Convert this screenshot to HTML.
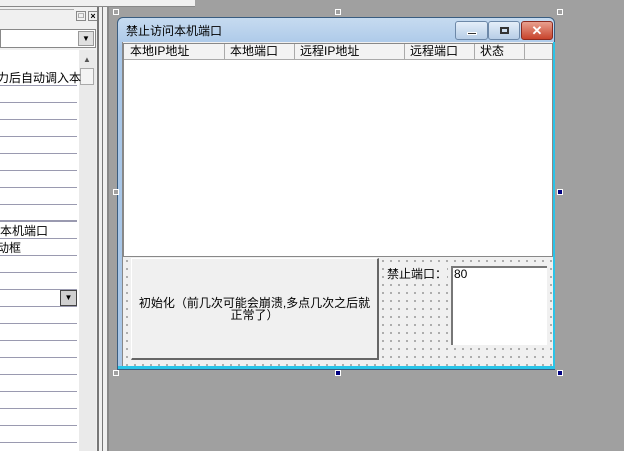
<!DOCTYPE html><html><head><meta charset="utf-8"><style>
*{margin:0;padding:0;box-sizing:border-box}
body{width:624px;height:451px;background:#a0a0a0;position:relative;overflow:hidden;font-family:"Liberation Sans","Noto Sans CJK SC",sans-serif;font-size:12px;color:#000}
.a{position:absolute}
.h{position:absolute;width:6px;height:6px;border:1px solid #fff;background:#a0a0a0}
.hf{position:absolute;width:6px;height:6px;background:#000080;border:1px solid #fff}
.dots{background-image:radial-gradient(#555 0.6px,transparent 0.9px);background-size:8px 8px;background-color:#f0f0f0}
</style></head><body>
<div class="a" style="left:0;top:0;width:195px;height:7px;background:#f0f0f0;border-bottom:1px solid #888"></div>
<div class="a" style="left:0;top:7px;width:109px;height:444px;background:#f0f0f0"></div>
<div class="a" style="left:0;top:9px;width:74px;height:1px;background:#aaa"></div>
<div class="a" style="left:76px;top:11px;width:10px;height:10px;border:1px solid #888;background:#f0f0f0;font-size:8px;line-height:8px;text-align:center">□</div>
<div class="a" style="left:88px;top:11px;width:10px;height:10px;border:1px solid #888;background:#f0f0f0;font-size:9px;font-weight:bold;line-height:8px;text-align:center">×</div>
<div class="a" style="left:0;top:29px;width:96px;height:19px;background:#fff;border:1px solid #888"></div>
<div class="a" style="left:78px;top:31px;width:16px;height:15px;background:#e0e0e0;border:1px solid #999;font-size:8px;text-align:center;line-height:14px">▼</div>
<div class="a" style="left:0;top:50px;width:79px;height:401px;background:#fff"></div>
<div class="a" style="left:79px;top:50px;width:17px;height:401px;background:#eaeaea"></div>
<div class="a" style="left:80px;top:68px;width:14px;height:17px;background:#f4f4f4;border:1px solid #aaa"></div>
<div class="a" style="left:83px;top:55px;font-size:8px;color:#555">▲</div>
<div class="a" style="left:97px;top:7px;width:2px;height:444px;background:#777"></div>
<div class="a" style="left:102px;top:7px;width:1px;height:444px;background:#777"></div>
<div class="a" style="left:107px;top:7px;width:2px;height:444px;background:#888"></div>
<div class="a" style="left:-3px;top:69px;white-space:nowrap">力后自动调入本</div>
<div class="a" style="left:0;top:222px;white-space:nowrap">本机端口</div>
<div class="a" style="left:-3px;top:239px;white-space:nowrap">动框</div>
<div class="a" style="left:60px;top:290px;width:17px;height:16px;background:#d0d0d0;border:1px solid #444;font-size:8px;text-align:center;line-height:14px">▼</div>
<svg class="a" style="left:0;top:0" width="79" height="451">
<g stroke="#9a9ab0" stroke-width="1">
<line x1="0" y1="85.5" x2="77" y2="85.5"/><line x1="0" y1="102.5" x2="77" y2="102.5"/><line x1="0" y1="119.5" x2="77" y2="119.5"/><line x1="0" y1="136.5" x2="77" y2="136.5"/><line x1="0" y1="153.5" x2="77" y2="153.5"/><line x1="0" y1="170.5" x2="77" y2="170.5"/><line x1="0" y1="187.5" x2="77" y2="187.5"/><line x1="0" y1="204.5" x2="77" y2="204.5"/><line x1="0" y1="221" x2="77" y2="221" stroke-width="2"/><line x1="0" y1="238.5" x2="77" y2="238.5"/><line x1="0" y1="255.5" x2="77" y2="255.5"/><line x1="0" y1="272.5" x2="77" y2="272.5"/><line x1="0" y1="289.5" x2="77" y2="289.5"/><line x1="0" y1="306.5" x2="77" y2="306.5"/><line x1="0" y1="323.5" x2="77" y2="323.5"/><line x1="0" y1="340.5" x2="77" y2="340.5"/><line x1="0" y1="357.5" x2="77" y2="357.5"/><line x1="0" y1="374.5" x2="77" y2="374.5"/><line x1="0" y1="391.5" x2="77" y2="391.5"/><line x1="0" y1="408.5" x2="77" y2="408.5"/><line x1="0" y1="425.5" x2="77" y2="425.5"/><line x1="0" y1="442.5" x2="77" y2="442.5"/>
</g></svg>

<!-- window -->
<div class="a" style="left:117px;top:17px;width:438px;height:353px;background:linear-gradient(#c6dbf0,#a9c7e8 30px);border:1px solid #3a5d80;border-radius:6px 6px 0 0"></div>
<div class="a" style="left:126px;top:22px;font-size:12px">禁止访问本机端口</div>
<div class="a" style="left:455px;top:21px;width:33px;height:19px;border:1px solid #6d88a8;border-radius:3px;background:linear-gradient(#e4eef9,#b7cde6)"><div class="a" style="left:11px;top:10px;width:10px;height:3px;background:#333;border:1px solid #fff"></div></div>
<div class="a" style="left:488px;top:21px;width:32px;height:19px;border:1px solid #6d88a8;border-radius:3px;background:linear-gradient(#e4eef9,#b7cde6)"><div class="a" style="left:11px;top:5px;width:9px;height:7px;border:2px solid #333"></div></div>
<div class="a" style="left:521px;top:21px;width:32px;height:19px;border:1px solid #8b2a20;border-radius:3px;background:linear-gradient(#e8a08f,#c8432c);color:#fff;font-weight:bold;text-align:center;font-size:13px;line-height:17px">✕</div>
<div class="a" style="left:122px;top:42px;width:431px;height:324px;background:#f0f0f0;border-left:1px solid #888"></div>
<div class="a" style="left:123px;top:43px;width:430px;height:214px;background:#fff;border:1px solid #888"></div>
<div class="a" style="left:124px;top:44px;width:428px;height:16px;background:#f3f3f3;border-bottom:1px solid #aaa;white-space:nowrap;line-height:15px">
<span class="a" style="left:6px">本地IP地址</span><span class="a" style="left:106px">本地端口</span><span class="a" style="left:176px">远程IP地址</span><span class="a" style="left:286px">远程端口</span><span class="a" style="left:356px">状态</span>
<span class="a" style="left:100px;top:0;width:1px;height:16px;background:#aaa"></span><span class="a" style="left:170px;top:0;width:1px;height:16px;background:#aaa"></span><span class="a" style="left:280px;top:0;width:1px;height:16px;background:#aaa"></span><span class="a" style="left:350px;top:0;width:1px;height:16px;background:#aaa"></span><span class="a" style="left:400px;top:0;width:1px;height:16px;background:#aaa"></span></div>
<div class="a dots" style="left:123px;top:257px;width:430px;height:109px"></div>
<div class="a" style="left:131px;top:258px;width:248px;height:102px;background:#f0f0f0;border-right:2px solid #666;border-bottom:2px solid #666;border-top:1px solid #fff;border-left:1px solid #fff;text-align:center;padding-top:38px;line-height:12px;font-size:12px">初始化（前几次可能会崩溃,多点几次之后就<br>正常了）</div>
<div class="a" style="left:387px;top:265px;background:#f0f0f0">禁止端口：</div>
<div class="a" style="left:451px;top:266px;width:96px;height:79px;background:#fff;border-top:2px solid #777;border-left:2px solid #777;padding-left:1px;line-height:12px">80</div>
<div class="a" style="left:553px;top:42px;width:2px;height:327px;background:#2ac4e8"></div>
<div class="a" style="left:118px;top:366px;width:437px;height:3px;background:#2ac4e8"></div>

<div class="h" style="left:113px;top:9px"></div><div class="h" style="left:335px;top:9px"></div><div class="h" style="left:557px;top:9px"></div>
<div class="h" style="left:113px;top:189px"></div><div class="hf" style="left:557px;top:189px"></div>
<div class="h" style="left:113px;top:370px"></div><div class="hf" style="left:335px;top:370px"></div><div class="hf" style="left:557px;top:370px"></div>
</body></html>
